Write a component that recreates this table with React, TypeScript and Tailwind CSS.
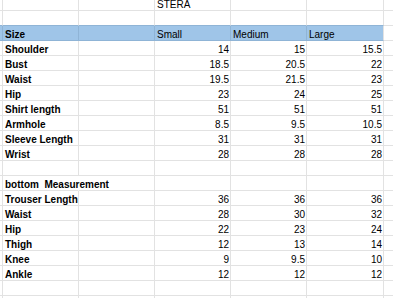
import React from 'react';

const widths = ['w-[2px]', 'w-[76px]', 'w-[76px]', 'w-[76px]', 'w-[76px]', 'w-[77px]', 'w-[10px]'];

type Row = {
  cells?: string[];
  header?: boolean;
  aboveHeader?: boolean;
  top?: boolean;
  spill?: boolean;
};

const rows: Row[] = [
  { top: true, cells: ['', '', 'STERA', '', ''] },
  { aboveHeader: true },
  { header: true, cells: ['Size', '', 'Small', 'Medium', 'Large'] },
  { cells: ['Shoulder', '', '14', '15', '15.5'] },
  { cells: ['Bust', '', '18.5', '20.5', '22'] },
  { cells: ['Waist', '', '19.5', '21.5', '23'] },
  { cells: ['Hip', '', '23', '24', '25'] },
  { cells: ['Shirt length', '', '51', '51', '51'] },
  { cells: ['Armhole', '', '8.5', '9.5', '10.5'] },
  { cells: ['Sleeve Length', '', '31', '31', '31'] },
  { cells: ['Wrist', '', '28', '28', '28'] },
  {},
  { spill: true, cells: ['bottom\u00a0\u00a0Measurement', '', '', '', ''] },
  { cells: ['Trouser Length', '', '36', '36', '36'] },
  { cells: ['Waist', '', '28', '30', '32'] },
  { cells: ['Hip', '', '22', '23', '24'] },
  { cells: ['Thigh', '', '12', '13', '14'] },
  { cells: ['Knee', '', '9', '9.5', '10'] },
  { cells: ['Ankle', '', '12', '12', '12'] },
  {},
  {},
];

function SheetRow({ row }: { row: Row }) {
  const cells = row.cells ?? ['', '', '', '', ''];
  const height = row.top ? 'h-[11px]' : 'h-[15px]';
  return (
    <div className={`flex ${height}`}>
      {widths.map((w, i) => {
        const blue = row.header && i <= 5;
        const right =
          row.header && i <= 4 ? 'border-r-[#8fb4d6]' : 'border-r-[#e2e2e2]';
        const bottom =
          (row.header || row.aboveHeader) && i <= 5 ? 'border-b-[#8fb4d6]' : 'border-b-[#e2e2e2]';
        const hideRight = row.spill && i === 1 ? 'border-r-transparent' : '';
        const text = i >= 1 && i <= 5 ? cells[i - 1] : '';
        const label = i === 1;
        const numeric = !row.header && !row.top && i >= 3 && text !== '';
        return (
          <div
            key={i}
            className={`${w} shrink-0 h-full border-r border-b ${right} ${bottom} ${hideRight} ${
              blue ? 'bg-[#9fc5e8]' : 'bg-white'
            } flex items-end ${numeric ? 'justify-end pr-px' : 'pl-[2px]'} ${
              row.spill && label ? 'relative z-10' : ''
            }`}
          >
            {text && (
              <span
                className={`whitespace-nowrap leading-[10px] text-[10px] text-black ${
                  label && !row.header ? 'font-bold' : ''
                } ${label && row.header ? 'font-bold' : ''}`}
              >
                {text}
              </span>
            )}
          </div>
        );
      })}
      <div className="flex-1 h-full border-b border-b-[#e2e2e2] bg-white" />
    </div>
  );
}

export default function App() {
  return (
    <div className="w-[393px] h-[298px] overflow-hidden bg-white font-['Liberation_Sans',Arial,sans-serif]">
      {rows.map((row, i) => (
        <SheetRow key={i} row={row} />
      ))}
    </div>
  );
}
